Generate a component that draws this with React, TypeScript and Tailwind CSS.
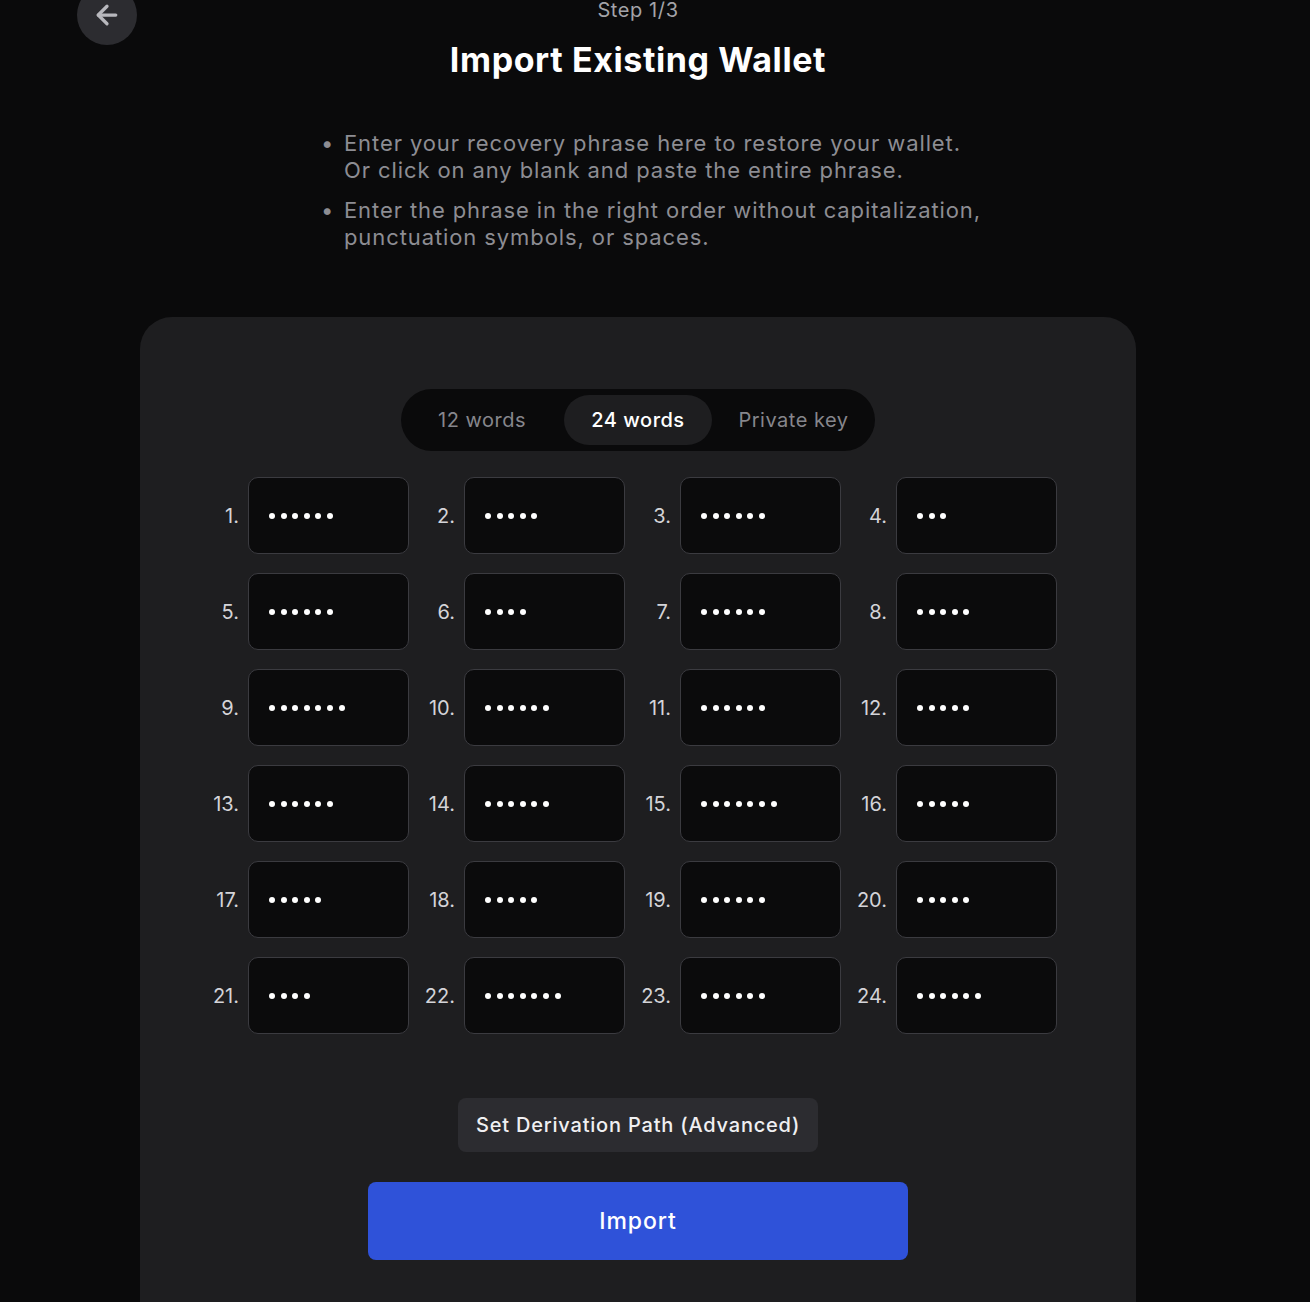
import { ArrowLeft } from "lucide-react";

const rows: number[][] = [
  [6, 5, 6, 3],
  [6, 4, 6, 5],
  [7, 6, 6, 5],
  [6, 6, 7, 5],
  [5, 5, 6, 5],
  [4, 7, 6, 6],
];

const tips = [
  ["Enter your recovery phrase here to restore your wallet.", "Or click on any blank and paste the entire phrase."],
  ["Enter the phrase in the right order without capitalization,", "punctuation symbols, or spaces."],
];

function WordField({ index, length }: { index: number; length: number }) {
  return (
    <div className="flex items-center">
      <span className="w-[46px] text-right text-[20px] text-[#d4d4d8]">{index}.</span>
      <div className="ml-[9px] flex h-[77px] w-[161px] items-center gap-[5.6px] rounded-[10px] border border-[#3b3b40] bg-[#0b0b0c] pl-[20px] pt-[1px]">
        {Array.from({ length }).map((_, i) => (
          <span key={i} className="h-[6px] w-[6px] rounded-full bg-white" />
        ))}
      </div>
    </div>
  );
}

export default function App() {
  return (
    <div
      className="relative min-h-[1302px] overflow-hidden bg-[#0a0a0b] text-white"
      style={{ fontFamily: "Inter, 'Noto Sans', sans-serif" }}
    >
      <button className="absolute left-[77px] top-[-15px] flex h-[60px] w-[60px] items-center justify-center rounded-full bg-[#2c2c30] text-[#b8b8bd]">
        <ArrowLeft size={30} strokeWidth={2.6} />
      </button>

      <div className="ml-[140px] w-[996px]">
        <div className="-mt-[3px] flex flex-col items-center">
          <p className="text-[20px] leading-[26px] tracking-[0.6px] text-[#a3a3a8]">Step 1/3</p>
          <h1 className="mt-[17px] text-[34px] font-bold leading-[40px] tracking-[0.6px]">Import Existing Wallet</h1>
        </div>

        <ul className="ml-[180px] mt-[50px] flex flex-col gap-[13px] text-[22px] leading-[27px] tracking-[0.9px] text-[#8d8d93]">
          {tips.map((lines, i) => (
            <li key={i} className="flex">
              <span className="w-[24px] pl-[1px]">•</span>
              <span>
                {lines[0]}
                <br />
                {lines[1]}
              </span>
            </li>
          ))}
        </ul>

        <div className="mt-[66px] flex min-h-[1000px] flex-col items-center rounded-t-[32px] bg-[#1e1e20] pt-[72px]">
          <div className="flex h-[62px] w-[474px] items-center rounded-full bg-[#0a0a0b] px-[6px] text-[20px] tracking-[0.5px]">
            <button className="w-[157px] pr-[7px] text-[#86868c]">12 words</button>
            <button className="h-[50px] w-[148px] rounded-full bg-[#1e1e20] font-medium text-white">24 words</button>
            <button className="w-[157px] pl-[6px] text-[#86868c]">Private key</button>
          </div>

          <div className="mt-[26px] pr-[26px]">
            <div className="grid grid-cols-4 gap-y-[19px]">
              {rows.flatMap((row, r) =>
                row.map((len, c) => <WordField key={r * 4 + c} index={r * 4 + c + 1} length={len} />)
              )}
            </div>
          </div>

          <button className="mt-[64px] h-[54px] w-[360px] rounded-[8px] bg-[#2c2c30] text-[20px] font-medium tracking-[0.8px] text-[#f0f0f2]">
            Set Derivation Path (Advanced)
          </button>

          <button className="mt-[30px] h-[78px] w-[540px] rounded-[8px] bg-[#2f52d9] text-[23px] font-medium tracking-[0.9px] text-white">
            Import
          </button>
        </div>
      </div>
    </div>
  );
}
